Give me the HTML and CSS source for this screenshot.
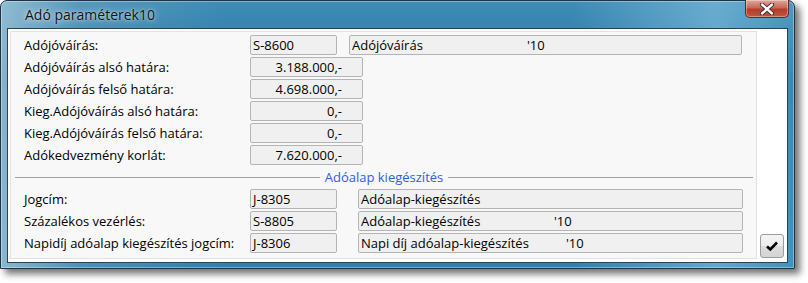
FILE: index.html
```html
<!DOCTYPE html>
<html lang="hu">
<head>
<meta charset="utf-8">
<title>Adó paraméterek10</title>
<link rel="stylesheet" href="styles.css">
</head>
<body>
<div class="window">
  <div class="titlebar">
    <span class="title">Adó paraméterek10</span>
    <button class="close" aria-label="Bezárás">
      <svg width="16" height="12" viewBox="0 0 16 12">
        <path d="M3 1.5 L13 10.5 M13 1.5 L3 10.5" stroke="#3a2420" stroke-width="4.2" stroke-linecap="round"/>
        <path d="M3 1.5 L13 10.5 M13 1.5 L3 10.5" stroke="#ffffff" stroke-width="2.4" stroke-linecap="round"/>
      </svg>
    </button>
  </div>
  <div class="client">
    <div class="panel">
      <div class="rows">
        <div class="row">
          <span class="label">Adójóváírás:</span>
          <span class="box code">S-8600</span>
          <span class="box name wide"><span class="n n1">Adójóváírás</span>'10</span>
        </div>
        <div class="row">
          <span class="label">Adójóváírás alsó határa:</span>
          <span class="box num">3.188.000,-</span>
        </div>
        <div class="row">
          <span class="label">Adójóváírás felső határa:</span>
          <span class="box num">4.698.000,-</span>
        </div>
        <div class="row">
          <span class="label">Kieg.Adójóváírás alsó határa:</span>
          <span class="box num">0,-</span>
        </div>
        <div class="row">
          <span class="label">Kieg.Adójóváírás felső határa:</span>
          <span class="box num">0,-</span>
        </div>
        <div class="row">
          <span class="label">Adókedvezmény korlát:</span>
          <span class="box num">7.620.000,-</span>
        </div>
      </div>
      <div class="section">
        <span class="rule"></span>
        <span class="section-title">Adóalap kiegészítés</span>
        <span class="rule"></span>
      </div>
      <div class="rows">
        <div class="row">
          <span class="label">Jogcím:</span>
          <span class="box code">J-8305</span>
          <span class="box name narrow">Adóalap-kiegészítés</span>
        </div>
        <div class="row">
          <span class="label">Százalékos vezérlés:</span>
          <span class="box code">S-8805</span>
          <span class="box name narrow"><span class="n n2">Adóalap-kiegészítés</span>'10</span>
        </div>
        <div class="row">
          <span class="label">Napidíj adóalap kiegészítés jogcím:</span>
          <span class="box code">J-8306</span>
          <span class="box name narrow"><span class="n n3">Napi díj adóalap-kiegészítés</span>'10</span>
        </div>
      </div>
    </div>
    <div class="side">
      <button class="ok" aria-label="OK">
        <svg width="14" height="12" viewBox="0 0 14 12">
          <path d="M2 6.5 L5.3 9.5 L12 2.5" fill="none" stroke="#000" stroke-width="2.6" stroke-linejoin="miter"/>
        </svg>
      </button>
    </div>
  </div>
</div>
</body>
</html>
```

FILE: styles.css
```css
html, body {
  margin: 0;
  padding: 0;
  background: #ffffff;
}

body {
  width: 808px;
  height: 283px;
  overflow: hidden;
  font-family: "Open Sans", "Noto Sans", sans-serif;
  font-size: 13px;
  color: #000;
}

.window {
  width: 793px;
  height: 267px;
  border: 1px solid #1c3446;
  border-radius: 7px 7px 0 0;
  background:
    linear-gradient(90deg, rgba(200,220,230,0.6) 0%, rgba(130,175,200,0.35) 10%, rgba(0,0,0,0) 28%, rgba(0,0,0,0) 72%, rgba(150,205,235,0.5) 90%, rgba(110,180,215,0.3) 100%),
    linear-gradient(180deg, #3f8cb6 0%, #2176a3 30%, #2c83b2 100%);
  box-shadow: 5px 5px 7px rgba(0, 0, 0, 0.55), inset 0 0 0 1px rgba(255,255,255,0.35);
  display: flex;
  flex-direction: column;
}

.titlebar {
  height: 27px;
  display: flex;
  align-items: flex-start;
  padding-left: 24px;
  padding-right: 5px;
}

.title {
  flex: 1;
  font-size: 14px;
  line-height: 28px;
  color: #101010;
  text-shadow: 0 0 6px rgba(255,255,255,0.8), 0 0 2px rgba(255,255,255,0.6);
}

.close {
  width: 44px;
  height: 18px;
  margin: -1px 0 0 0;
  padding: 0;
  border: 1px solid #5e2a24;
  border-top: 0;
  border-radius: 0 0 5px 5px;
  background: linear-gradient(180deg, #e0a79d 0%, #c8685a 45%, #b23d2c 55%, #c4543f 100%);
  box-shadow: inset 0 0 0 1px rgba(255,255,255,0.35);
  display: flex;
  align-items: center;
  justify-content: center;
}

.client {
  flex: 1;
  margin: 0 6px 5px 6px;
  border: 1px solid #2c4452;
  background: #ffffff;
  display: flex;
  padding: 2px 2px 3px 2px;
}

.panel {
  width: 745px;
  border: 1px solid #e2e2e2;
  background: #f8f8f8;
  padding-top: 3px;
}

.rows {
  display: flex;
  flex-direction: column;
  gap: 2px;
}

.row {
  display: flex;
  align-items: center;
  height: 20px;
  padding-left: 13px;
}

.label {
  width: 226px;
  white-space: nowrap;
}

.box {
  box-sizing: border-box;
  height: 20px;
  line-height: 18px;
  border: 1px solid #b4b4b4;
  border-radius: 2px;
  background: #f0f0f0;
  white-space: nowrap;
  overflow: hidden;
}

.code {
  width: 87px;
  padding-left: 2px;
}

.num {
  width: 113px;
  text-align: right;
  padding-right: 20px;
}

.name {
  padding-left: 2px;
}

.wide {
  width: 393px;
  margin-left: 12px;
}

.narrow {
  width: 385px;
  margin-left: 21px;
}

.n {
  display: inline-block;
}

.n1 { width: 175px; }
.n2 { width: 193px; }
.n3 { width: 205px; }

.section {
  display: flex;
  align-items: center;
  height: 16px;
  margin: 4px 0 4px 0;
  padding: 0 3px 0 4px;
}

.rule {
  flex: 1;
  height: 1px;
  background: #a0a0a0;
}

.section-title {
  margin: 0 5px;
  color: #2e5cf0;
  font-size: 13px;
  line-height: 16px;
}

.side {
  flex: 1;
  display: flex;
  align-items: flex-end;
  justify-content: center;
  padding-left: 2px;
}

.ok {
  width: 24px;
  height: 24px;
  padding: 0;
  margin: 0 0 1px 0;
  border: 1px solid #9c9c9c;
  border-radius: 3px;
  background: linear-gradient(180deg, #f4f4f4 0%, #ececec 50%, #dcdcdc 51%, #d4d4d4 100%);
  display: flex;
  align-items: center;
  justify-content: center;
}
```
